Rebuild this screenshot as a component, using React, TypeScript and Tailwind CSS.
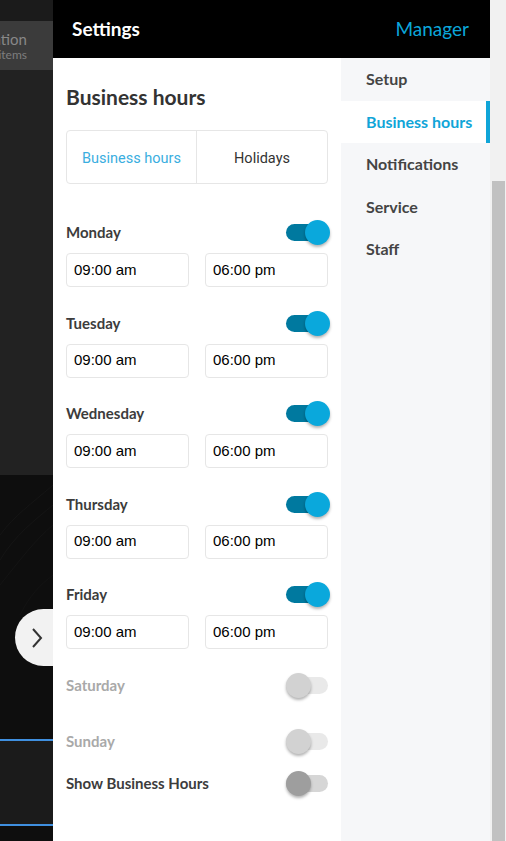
import React from "react";

const days = [
  { name: "Monday", on: true },
  { name: "Tuesday", on: true },
  { name: "Wednesday", on: true },
  { name: "Thursday", on: true },
  { name: "Friday", on: true },
];

function Toggle({ on, dark }: { on: boolean; dark?: boolean }) {
  return (
    <div className="relative w-[44px] h-[25px] -mr-[2px] shrink-0">
      <div
        className={
          "absolute left-0 top-[4px] w-[42px] h-[17px] rounded-full " +
          (on ? "bg-[#00799f]" : dark ? "bg-[#d6d6d6]" : "bg-[#e9e9e9]")
        }
      />
      <div
        className={
          "absolute top-0 w-[25px] h-[25px] rounded-full shadow-[0_2px_3px_rgba(0,0,0,0.3)] " +
          (on ? "left-[19px] bg-[#0aa8dc]" : dark ? "left-0 bg-[#9e9e9e]" : "left-0 bg-[#d2d2d2]")
        }
      />
    </div>
  );
}

function TimeInput({ value }: { value: string }) {
  return (
    <div className="w-[123px] h-[34px] border border-[#e6e6e6] rounded-[4px] flex items-center pl-[7px] text-[15px] text-black" style={{ fontFamily: '"Liberation Sans", Arial, sans-serif' }}>
      {value}
    </div>
  );
}

export default function App() {
  const nav = ["Setup", "Business hours", "Notifications", "Service", "Staff"];
  return (
    <div className="flex w-[506px] h-[841px] overflow-hidden" style={{ fontFamily: 'Lato, "Noto Sans", sans-serif' }}>
      {/* left background app */}
      <div className="relative w-[53px] shrink-0 flex flex-col bg-[#0e0e0e]">
        <div className="h-[21px] bg-[#1b1b1b]" />
        <div className="h-[49px] bg-[#3b3b3b] flex flex-col items-end justify-center pr-[26px] overflow-hidden whitespace-nowrap">
          <div className="text-[15px] leading-[18px] text-[#888]">Reservation</div>
          <div className="text-[12px] leading-[14px] text-[#7e7e7e]">12 items</div>
        </div>
        <div className="h-[405px] bg-[#222222]" />
        <div className="h-[264px] bg-[#0e0e0e] relative overflow-hidden">
          <svg className="absolute inset-0" width="53" height="264" viewBox="0 0 53 264">
            <path d="M0 60 C15 40 30 30 53 10" stroke="#151515" fill="none" />
            <path d="M0 85 C15 60 35 45 53 30" stroke="#151515" fill="none" />
            <path d="M0 110 C20 85 35 65 53 50" stroke="#141414" fill="none" />
            <path d="M20 140 C30 120 40 110 53 100" stroke="#131313" fill="none" />
          </svg>
        </div>
        <div className="h-[2px] bg-[#3f8fdf]" />
        <div className="h-[83px] bg-[#1b1b1b]" />
        <div className="h-[2px] bg-[#3f8fdf]" />
        <div className="flex-1 bg-[#0e0e0e]" />
        <div className="absolute left-[15px] top-[609px] w-[70px] h-[57px] rounded-full bg-[#f2f2f2] flex items-center pl-[15px]">
          <svg width="14" height="22" viewBox="0 0 14 22">
            <path d="M3 2 L11 11 L3 20" stroke="#333" strokeWidth="2" fill="none" />
          </svg>
        </div>
      </div>

      {/* settings panel */}
      <div className="relative z-10 w-[437px] shrink-0 flex flex-col bg-white">
        <div className="h-[58px] bg-black flex items-center justify-between pl-[19px] pr-[21px]">
          <span className="text-white text-[19px] font-bold">Settings</span>
          <span className="text-[#0ba6da] text-[19px]">Manager</span>
        </div>
        <div className="flex flex-1">
          <div className="w-[288px] px-[13px] flex flex-col">
            <h1 className="mt-[25px] text-[21px] leading-[28px] font-bold text-[#333]">Business hours</h1>
            <div className="mt-[19px] h-[54px] border border-[#e6e6e6] rounded-[4px] flex text-[14.5px]" style={{ fontFamily: 'Roboto, sans-serif' }}>
              <div className="w-[130px] flex items-center justify-center pt-[3px] border-r border-[#e6e6e6] text-[#3aaee0]">Business hours</div>
              <div className="flex-1 flex items-center justify-center pt-[3px] text-[#333]">Holidays</div>
            </div>
            <div className="mt-[36px] flex flex-col">
              {days.map((d) => (
                <div key={d.name} className="flex flex-col mb-[23.5px]">
                  <div className="h-[25px] flex items-center justify-between">
                    <span className="text-[15px] font-bold text-[#3c3c3c]">{d.name}</span>
                    <Toggle on={d.on} />
                  </div>
                  <div className="mt-[8px] flex justify-between">
                    <TimeInput value="09:00 am" />
                    <TimeInput value="06:00 pm" />
                  </div>
                </div>
              ))}
              <div className="h-[25px] flex items-center justify-between">
                <span className="text-[15px] font-bold text-[#a9a9a9]">Saturday</span>
                <Toggle on={false} />
              </div>
              <div className="mt-[31px] h-[25px] flex items-center justify-between">
                <span className="text-[15px] font-bold text-[#a9a9a9]">Sunday</span>
                <Toggle on={false} />
              </div>
              <div className="mt-[17px] h-[25px] flex items-center justify-between">
                <span className="text-[15px] font-bold text-[#3c3c3c]">Show Business Hours</span>
                <Toggle on={false} dark />
              </div>
            </div>
          </div>
          <div className="flex-1 bg-[#f6f7f9] flex flex-col">
            {nav.map((n) => {
              const active = n === "Business hours";
              return (
                <div
                  key={n}
                  className={
                    "h-[42.5px] flex items-center pl-[25px] text-[16px] font-bold " +
                    (active ? "bg-white text-[#10a5d8] border-r-[4px] border-[#10a5d8]" : "text-[#444]")
                  }
                >
                  {n}
                </div>
              );
            })}
          </div>
        </div>
      </div>

      {/* scrollbar */}
      <div className="flex-1 bg-[#f1f1f1] flex flex-col">
        <div className="mt-[181px] ml-[2px] w-[13px] flex-1 bg-[#c1c1c1]" />
      </div>
    </div>
  );
}
